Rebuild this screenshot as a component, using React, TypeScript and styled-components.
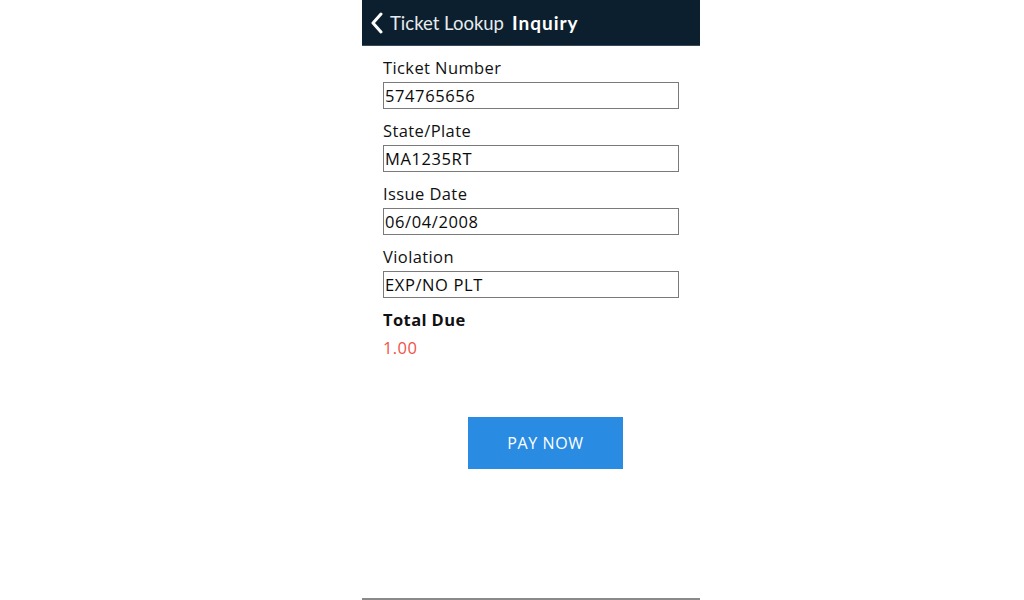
import React, { FC } from 'react';
import styled, { createGlobalStyle } from 'styled-components';

const GlobalStyle = createGlobalStyle`
  html, body {
    margin: 0;
    padding: 0;
    background: #ffffff;
    font-family: 'Open Sans', 'Lato', sans-serif;
  }
`;

const Screen = styled.div`
  width: 338px;
  height: 600px;
  margin-left: 362px;
  display: flex;
  flex-direction: column;
  box-sizing: border-box;
  border-bottom: 2px solid #8a8a8a;
  background: #fff;
`;

const Header = styled.header`
  height: 46px;
  background: #0c1f2e;
  border-bottom: 1px solid #3a4a58;
  display: flex;
  align-items: center;
  padding-left: 8px;
  box-sizing: border-box;
  color: #fff;
`;

const BackBtn = styled.button`
  background: none;
  border: none;
  padding: 0;
  display: flex;
  align-items: center;
  color: #fff;
  cursor: pointer;
  margin-right: 6px;
`;

const BackText = styled.span`
  font-family: 'Lato', sans-serif;
  font-size: 18.5px;
  color: #e8ecef;
  margin-right: 8px;
`;

const Title = styled.h1`
  margin: 0;
  font-family: 'Lato', sans-serif;
  font-size: 19px;
  font-weight: 700;
  letter-spacing: 1px;
`;

const Body = styled.main`
  flex: 1;
  padding: 12px 21px 0;
  display: flex;
  flex-direction: column;
`;

const Field = styled.div`
  display: flex;
  flex-direction: column;
  margin-bottom: 12px;
`;

const Label = styled.label<{ $bold?: boolean }>`
  font-size: 16.5px;
  font-weight: ${p => (p.$bold ? 700 : 500)};
  color: #111;
  line-height: 20px;
  letter-spacing: 0.4px;
  margin-bottom: 4px;
`;

const Input = styled.input`
  width: 296px;
  height: 27px;
  box-sizing: border-box;
  border: 1px solid #7a7a7a;
  padding: 0 0 0 1px;
  font-family: inherit;
  font-size: 16.5px;
  font-weight: 500;
  letter-spacing: 0.6px;
  color: #0a0a0a;
  outline: none;
`;

const Amount = styled.div`
  font-size: 16.5px;
  font-weight: 500;
  letter-spacing: 0.4px;
  color: #f0524a;
  margin-top: 2px;
`;

const PayBtn = styled.button`
  align-self: flex-start;
  margin-top: 58px;
  margin-left: 85px;
  width: 155px;
  height: 52px;
  border: none;
  background: #2a8be2;
  color: #fff;
  font-family: inherit;
  font-size: 16px;
  font-weight: 500;
  letter-spacing: 0.6px;
  cursor: pointer;
`;

const fields = [
  { label: 'Ticket Number', value: '574765656' },
  { label: 'State/Plate', value: 'MA1235RT' },
  { label: 'Issue Date', value: '06/04/2008' },
  { label: 'Violation', value: 'EXP/NO PLT' },
];

const App: FC = () => (
  <>
    <GlobalStyle />
    <Screen>
      <Header>
        <BackBtn aria-label="Back">
          <svg width="14" height="22" viewBox="0 0 14 22">
            <path d="M11 2 L3 11 L11 20" fill="none" stroke="#fff" strokeWidth="3" strokeLinecap="round" strokeLinejoin="round" />
          </svg>
        </BackBtn>
        <BackText>Ticket Lookup</BackText>
        <Title>Inquiry</Title>
      </Header>
      <Body>
        {fields.map(f => (
          <Field key={f.label}>
            <Label>{f.label}</Label>
            <Input defaultValue={f.value} readOnly />
          </Field>
        ))}
        <Label $bold>Total Due</Label>
        <Amount>1.00</Amount>
        <PayBtn>PAY NOW</PayBtn>
      </Body>
    </Screen>
  </>
);

export default App;
